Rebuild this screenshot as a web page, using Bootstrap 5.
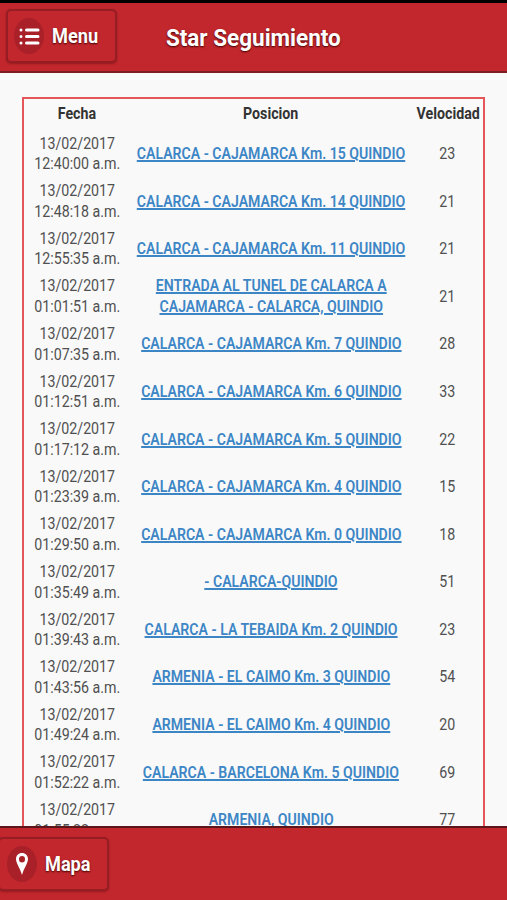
<!DOCTYPE html>
<html lang="es">
<head>
<meta charset="utf-8">
<meta name="viewport" content="width=device-width, initial-scale=1">
<title>Star Seguimiento</title>
<link href="https://cdn.jsdelivr.net/npm/bootstrap@5.3.0/dist/css/bootstrap.min.css" rel="stylesheet">
<style>
body{font-family:Roboto,"Liberation Sans",sans-serif;background:#f9f9f9;color:#505050;height:900px;font-size:16.3px;line-height:20.7px}
.bar{background:#c1272d;color:#fff;text-shadow:0 1px 2px #400}
.bar-top{height:73px;border-top:3px solid #000;border-bottom:2px solid #7c1f24;padding:6px 6px 0;grid-template-columns:111px 1fr 111px}
.bar-bottom{height:74px;border-top:2px solid #5c161a;padding-top:9px}
.bar-btn{width:111px;height:54px;border:2px solid #951d23;border-radius:5px;box-shadow:0 1px 2px rgba(70,0,0,.35);background:#c1272d;color:#fff;font-size:21px;font-weight:700;padding:0;text-shadow:0 1px 2px #400}
.bar-bottom .bar-btn{margin-left:-2px}
.disc{width:30px;height:36px;border-radius:50%;background:#a92028;margin:0 8px 0 6px}
.bar-bottom .disc{margin:0 8px 0 7px}
.squeeze{display:inline-block;white-space:nowrap;transform:scaleX(.873)}
.bar-btn .squeeze{transform:scaleX(.865);transform-origin:left}
.bar .heading{font-size:24px;font-weight:700;transform:scaleX(.937)}
.heading-wrap{padding-top:19px}
.track{margin:24px 22px 0;border:2px solid #e5565a;height:760px}
.trow{display:grid;grid-template-columns:106px 282px 1fr;height:47.6px;align-items:center;justify-items:center;text-align:center}
.thead-row{height:31.5px;font-weight:700;color:#333}
.trow a{color:#3d86c6;font-weight:600;text-underline-offset:1px;text-decoration-thickness:1.5px;transform:scaleX(.866)}
</style>
<script src="https://cdn.jsdelivr.net/npm/bootstrap@5.3.0/dist/js/bootstrap.bundle.min.js"></script>
</head>
<body class="d-flex flex-column overflow-hidden">
<header class="bar bar-top d-grid flex-shrink-0">
<button class="bar-btn d-flex align-items-center"><span class="disc d-flex align-items-center justify-content-center"><svg width="21" height="17" viewBox="0 0 21 17" fill="none" stroke="#fff" stroke-linecap="round" stroke-width="3"><path d="M2 2h0M7.500 2H19M2 8.500h0M7.500 8.500H19M2 15h0M7.500 15H19"/></svg></span><span class="squeeze">Menu</span></button>
<div class="text-center heading-wrap"><span class="squeeze heading">Star Seguimiento</span></div>
</header>
<main class="flex-grow-1 overflow-hidden" style="min-height:0">
<div class="track" id="track">
<div class="trow thead-row"><span class="squeeze">Fecha</span><span class="squeeze">Posicion</span><span class="squeeze">Velocidad</span></div>
</div>
</main>
<footer class="bar bar-bottom flex-shrink-0">
<button class="bar-btn d-flex align-items-center"><span class="disc d-flex align-items-center justify-content-center"><svg width="12" height="22" viewBox="0 0 12 22"><path fill="#fff" fill-rule="evenodd" d="M6 0C2.500 0 0 2.600 0 6c0 4 4 9 6 16 2-7 6-12 6-16 0-3.400-2.500-6-6-6zm0 3a3 3.200 0 1 1 0 6.400A3 3.200 0 0 1 6 3z"/></svg></span><span class="squeeze">Mapa</span></button>
</footer>
<script>
const rows=[
["12:40:00","CALARCA - CAJAMARCA Km. 15 QUINDIO",23],
["12:48:18","CALARCA - CAJAMARCA Km. 14 QUINDIO",21],
["12:55:35","CALARCA - CAJAMARCA Km. 11 QUINDIO",21],
["01:01:51","ENTRADA AL TUNEL DE CALARCA A<br>CAJAMARCA - CALARCA, QUINDIO",21],
["01:07:35","CALARCA - CAJAMARCA Km. 7 QUINDIO",28],
["01:12:51","CALARCA - CAJAMARCA Km. 6 QUINDIO",33],
["01:17:12","CALARCA - CAJAMARCA Km. 5 QUINDIO",22],
["01:23:39","CALARCA - CAJAMARCA Km. 4 QUINDIO",15],
["01:29:50","CALARCA - CAJAMARCA Km. 0 QUINDIO",18],
["01:35:49","- CALARCA-QUINDIO",51],
["01:39:43","CALARCA - LA TEBAIDA Km. 2 QUINDIO",23],
["01:43:56","ARMENIA - EL CAIMO Km. 3 QUINDIO",54],
["01:49:24","ARMENIA - EL CAIMO Km. 4 QUINDIO",20],
["01:52:22","CALARCA - BARCELONA Km. 5 QUINDIO",69],
["01:55:22","ARMENIA, QUINDIO",77]];
document.getElementById("track").insertAdjacentHTML("beforeend",rows.map(r=>
`<div class="trow"><span class="squeeze">13/02/2017<br>${r[0]} a.m.</span><a class="squeeze" href="#">${r[1]}</a><span class="squeeze">${r[2]}</span></div>`).join(""));
</script>
</body>
</html>
